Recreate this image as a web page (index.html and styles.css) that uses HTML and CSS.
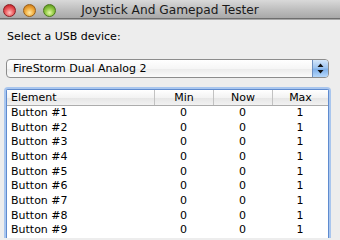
FILE: index.html
```html
<!DOCTYPE html>
<html>
<head>
<meta charset="utf-8">
<link rel="stylesheet" href="styles.css">
</head>
<body>
<div class="window">
  <div class="titlebar">
    <div class="lights">
      <span class="light red"></span>
      <span class="light yellow"></span>
      <span class="light green"></span>
    </div>
    <div class="title">Joystick And Gamepad Tester</div>
    <div></div>
  </div>
  <div class="content">
    <div class="label">Select a USB device:</div>
    <div class="popup">
      <span class="popup-text">FireStorm Dual Analog 2</span>
      <span class="popup-arrows">
        <svg width="7" height="11" viewBox="0 0 7 11"><path d="M3.5 0.5 L6.5 4 L0.5 4 Z M3.5 10.5 L6.5 7 L0.5 7 Z" fill="#111"/></svg>
      </span>
    </div>
    <div class="table">
      <div class="row head">
        <div class="cell name">Element</div>
        <div class="cell num div">Min</div>
        <div class="cell num div">Now</div>
        <div class="cell num div">Max</div>
      </div>
      <div class="row"><div class="cell name">Button #1</div><div class="cell num">0</div><div class="cell num">0</div><div class="cell num">1</div></div>
      <div class="row"><div class="cell name">Button #2</div><div class="cell num">0</div><div class="cell num">0</div><div class="cell num">1</div></div>
      <div class="row"><div class="cell name">Button #3</div><div class="cell num">0</div><div class="cell num">0</div><div class="cell num">1</div></div>
      <div class="row"><div class="cell name">Button #4</div><div class="cell num">0</div><div class="cell num">0</div><div class="cell num">1</div></div>
      <div class="row"><div class="cell name">Button #5</div><div class="cell num">0</div><div class="cell num">0</div><div class="cell num">1</div></div>
      <div class="row"><div class="cell name">Button #6</div><div class="cell num">0</div><div class="cell num">0</div><div class="cell num">1</div></div>
      <div class="row"><div class="cell name">Button #7</div><div class="cell num">0</div><div class="cell num">0</div><div class="cell num">1</div></div>
      <div class="row"><div class="cell name">Button #8</div><div class="cell num">0</div><div class="cell num">0</div><div class="cell num">1</div></div>
      <div class="row"><div class="cell name">Button #9</div><div class="cell num">0</div><div class="cell num">0</div><div class="cell num">1</div></div>
    </div>
  </div>
</div>
</body>
</html>
```
FILE: styles.css
```css
html, body {
  margin: 0;
  padding: 0;
  width: 340px;
  height: 238px;
  overflow: hidden;
  background: #ededed;
  font-family: "DejaVu Sans", "Noto Sans", sans-serif;
  font-size: 11px;
  color: #000;
}
.window {
  width: 340px;
  height: 238px;
  overflow: hidden;
}
.titlebar {
  height: 18px;
  display: grid;
  grid-template-columns: 1fr auto 1fr;
  align-items: center;
  background: linear-gradient(#d9d9d9, #bdbdbd 55%, #a9a9a9);
  border-bottom: 1px solid #6e6e6e;
  box-shadow: 0 1px 0 #a8a8a8;
}
.lights {
  display: flex;
  gap: 7px;
  padding-left: 3px;
  align-items: center;
  padding-top: 2px;
}
.light {
  width: 13px;
  height: 13px;
  border-radius: 50%;
  box-sizing: border-box;
}
.red {
  background: radial-gradient(circle at 50% 70%, #ffc4c0 0%, #f0676a 40%, #c61e25 85%);
  border: 1px solid #8c2024;
}
.yellow {
  background: radial-gradient(circle at 50% 70%, #ffeaa6 0%, #f4b54a 40%, #cf7a12 85%);
  border: 1px solid #9a6018;
}
.green {
  background: radial-gradient(circle at 50% 70%, #e6f9a8 0%, #9bd04e 40%, #5c9a1c 85%);
  border: 1px solid #4c7a1c;
}
.title {
  font-size: 12.2px;
  color: #1a1a1a;
  padding-top: 1px;
  white-space: nowrap;
}
.content {
  padding-top: 11px;
}
.label {
  padding-left: 7px;
  line-height: 13px;
  height: 13px;
}
.popup {
  margin: 16px 11px 0 6px;
  height: 19px;
  box-sizing: border-box;
  border: 1px solid #8c8c8c;
  border-radius: 4px;
  background: linear-gradient(#ffffff, #f6f6f6 50%, #ececec 55%, #fbfbfb);
  display: flex;
  align-items: center;
  justify-content: space-between;
  overflow: hidden;
}
.popup-text {
  padding-left: 6px;
  line-height: 17px;
}
.popup-arrows {
  width: 15px;
  height: 17px;
  display: flex;
  align-items: center;
  justify-content: center;
  background: linear-gradient(#d4e6fa, #9fc5f0 45%, #7fb0ea 55%, #b6d8fb);
  border-left: 1px solid #6d8fc0;
}
.table {
  margin: 11px 11px 0 6px;
  border: 1px solid #5f8bcf;
  border-bottom: none;
  box-shadow: 0 0 0 2px #a9c6ee;
  border-radius: 2px 2px 0 0;
  background: #fff;
}
.row {
  display: grid;
  grid-template-columns: 147px 59px 59px 1fr;
  height: 14.66px;
  line-height: 14.66px;
}
.head {
  height: 15px;
  line-height: 15px;
  background: linear-gradient(#ffffff, #f3f3f3 50%, #e6e6e6 55%, #f2f2f2);
  border-bottom: 1px solid #acacac;
}
.cell {
  white-space: nowrap;
}
.name {
  padding-left: 4px;
}
.num {
  text-align: center;
}
.div {
  border-left: 1px solid #c2c2c2;
}
```
